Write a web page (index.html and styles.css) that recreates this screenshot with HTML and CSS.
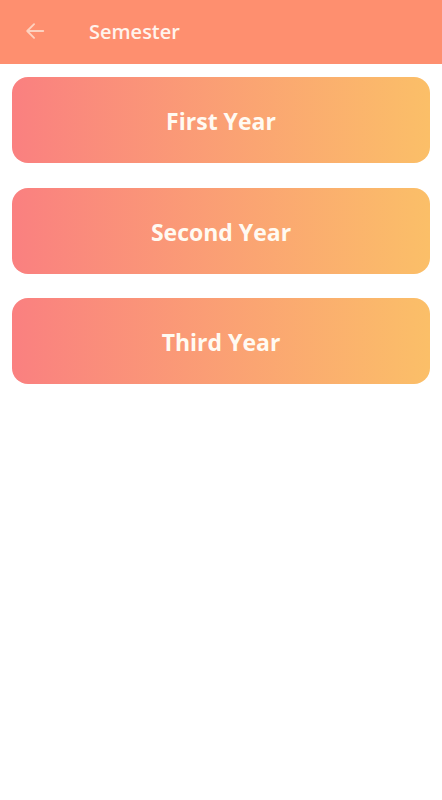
FILE: index.html
```html
<!DOCTYPE html>
<html lang="en">
<head>
  <meta charset="UTF-8">
  <meta name="viewport" content="width=device-width, initial-scale=1.0">
  <title>Semester</title>
  <link rel="stylesheet" href="styles.css">
</head>
<body>

<div class="toolbar">
  <svg class="back" width="22" height="22" viewBox="0 0 24 24">
    <path d="M21 12H4M11 4.5L3.5 12L11 19.5" fill="none" stroke="currentColor" stroke-width="2" stroke-linecap="round" stroke-linejoin="round"/>
  </svg>
  <h1 class="title">Semester</h1>
</div>

<div class="years">
  <div class="year">First Year</div>
  <div class="year">Second Year</div>
  <div class="year">Third Year</div>
</div>

</body>
</html>
```

FILE: styles.css
```css
body {
  margin: 0;
  font-family: "Open Sans", sans-serif;
  background-color: #fff;
}

.toolbar {
  height: 64px;
  background-color: #fe8f6f;
  display: flex;
  align-items: center;
  padding: 0 0 2px 24px;
  box-sizing: border-box;
}

.back {
  color: #fdd2c0;
}

.title {
  margin: 0 0 0 43px;
  font-size: 20px;
  font-weight: 600;
  color: #fff3ec;
}

.years {
  display: flex;
  flex-direction: column;
  gap: 24.5px;
  padding: 13px 12px;
}

.year {
  height: 86px;
  padding-top: 2px;
  box-sizing: border-box;
  border-radius: 16px;
  background: linear-gradient(to right, #fa8080, #fbbf68);
  display: flex;
  align-items: center;
  justify-content: center;
  color: #fffaf2;
  font-size: 23px;
  font-weight: 700;
}
```
